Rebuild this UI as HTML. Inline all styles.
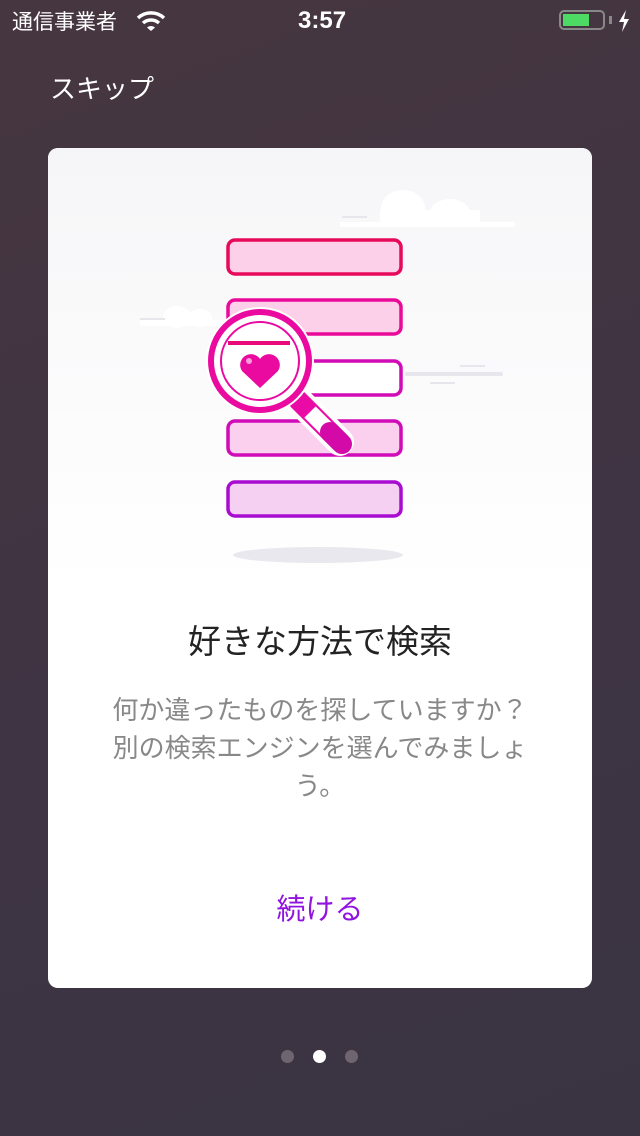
<!DOCTYPE html>
<html><head><meta charset="utf-8"><style>
body{margin:0;width:640px;height:1136px;background:linear-gradient(160deg,#46363f,#3e3444 60%,#3a3442);font-family:"Liberation Sans","Noto Sans CJK JP",sans-serif;position:relative;overflow:hidden}
.sb{position:absolute;top:0;left:0;width:640px;height:40px;color:#fff}
.card{position:absolute;left:48px;top:148px;width:544px;height:840px;background:#fff;border-radius:10px;overflow:hidden}
.illu{position:absolute;left:0;top:0;width:544px;height:440px;background:linear-gradient(#f6f6f8,#fff)}
.t{position:absolute;width:544px;text-align:center;top:467px;font-size:33px;color:#222}
.d{position:absolute;left:0;width:544px;text-align:center;top:543px;font-size:26px;line-height:38px;color:#888;white-space:nowrap}
.c{position:absolute;width:544px;text-align:center;top:738px;font-size:29px;color:#9013e0}
.dot{position:absolute;top:1050px;width:13px;height:13px;border-radius:50%;background:#6f6570}
</style></head><body>
<div class="sb">
<span style="position:absolute;left:12px;top:6px;font-size:21px">通信事業者</span>
<svg style="position:absolute;left:136px;top:10px" width="30" height="22" viewBox="0 0 30 22"><path d="M2 8a19 19 0 0 1 26 0" stroke="#fff" stroke-width="3.5" fill="none"/><path d="M7 13a12 12 0 0 1 16 0" stroke="#fff" stroke-width="3.5" fill="none"/><path d="M11 17.5a6 6 0 0 1 8 0L15 21z" fill="#fff"/></svg>
<span style="position:absolute;left:298px;top:7px;font-size:24px;font-weight:bold">3:57</span>
<div style="position:absolute;left:559px;top:10px;width:46px;height:20px;border:2px solid #888;border-radius:5px;box-sizing:border-box"><div style="margin:2px;width:26px;height:12px;background:#4cd964"></div></div>
<div style="position:absolute;left:609px;top:16px;width:3px;height:8px;background:#888"></div>
<svg style="position:absolute;left:617px;top:10px" width="14" height="22" viewBox="0 0 14 22"><path d="M9 0L2 12h5l-2 10 7-13H7z" fill="#fff"/></svg>
</div>
<div style="position:absolute;left:50px;top:69px;font-size:26px;color:#fff">スキップ</div>
<div class="card">
<div class="illu"></div>
<svg style="position:absolute;left:0;top:0" width="544" height="440" viewBox="48 148 544 440">
<g fill="#fff"><ellipse cx="403" cy="208" rx="22" ry="18"/><ellipse cx="450" cy="213" rx="20" ry="14"/><rect x="380" y="210" width="100" height="15"/><rect x="340" y="222" width="175" height="5"/><ellipse cx="177" cy="317" rx="14" ry="11"/><ellipse cx="200" cy="318" rx="12" ry="9"/><rect x="140" y="320" width="85" height="6"/></g>
<g fill="#e6e6ec"><rect x="405" y="372" width="98" height="4" rx="2"/><rect x="460" y="365" width="25" height="2"/><rect x="430" y="382" width="25" height="2"/><rect x="342" y="216" width="25" height="2"/><rect x="140" y="318" width="25" height="2"/></g>
<ellipse cx="318" cy="555" rx="85" ry="8" fill="#e8e8ee"/>
<g stroke-width="3.5" fill="#fdd0ea">
<rect x="228" y="240" width="173" height="34" rx="7" stroke="#e80a5a"/>
<rect x="228" y="300" width="173" height="34" rx="7" stroke="#ea0a9a"/>
<rect x="228" y="361" width="173" height="34" rx="7" stroke="#d10bb5" fill="#fff"/>
<rect x="228" y="421" width="173" height="34" rx="7" stroke="#d00bb8" fill="#fbd0ee"/>
<rect x="228" y="482" width="173" height="34" rx="7" stroke="#a80cd0" fill="#f6d0f2"/>
</g>
<g>
<line x1="298" y1="400" x2="340" y2="442" stroke="#fff" stroke-width="28" stroke-linecap="round"/>
<line x1="298" y1="400" x2="340" y2="442" stroke="#ea0aa6" stroke-width="20" stroke-linecap="round"/>
<line x1="310" y1="412" x2="326" y2="428" stroke="#fff" stroke-width="16"/>
<line x1="330" y1="432" x2="342" y2="444" stroke="#d40aa8" stroke-width="20" stroke-linecap="round"/>
<circle cx="260" cy="361" r="54" fill="#fff"/>
<circle cx="260" cy="361" r="49" fill="none" stroke="#ea0aa0" stroke-width="6"/>
<circle cx="260" cy="361" r="39" fill="#fff" stroke="#ea0aa0" stroke-width="2"/>
<path d="M228 341h62v4h-62z" fill="#e80a7a"/>
<path d="M260 388l-18-17a10 10 0 0 1 18-12a10 10 0 0 1 18 12z" fill="#ea0aa0"/>
<circle cx="249" cy="361" r="3" fill="#fff" opacity=".6"/>
</g>
</svg>
<div class="t">好きな方法で検索</div>
<div class="d">何か違ったものを探していますか？<br>別の検索エンジンを選んでみましょ<br>う。</div>
<div class="c">続ける</div>
</div>
<div class="dot" style="left:281px"></div>
<div class="dot" style="left:313px;background:#fff"></div>
<div class="dot" style="left:345px"></div>
</body></html>
